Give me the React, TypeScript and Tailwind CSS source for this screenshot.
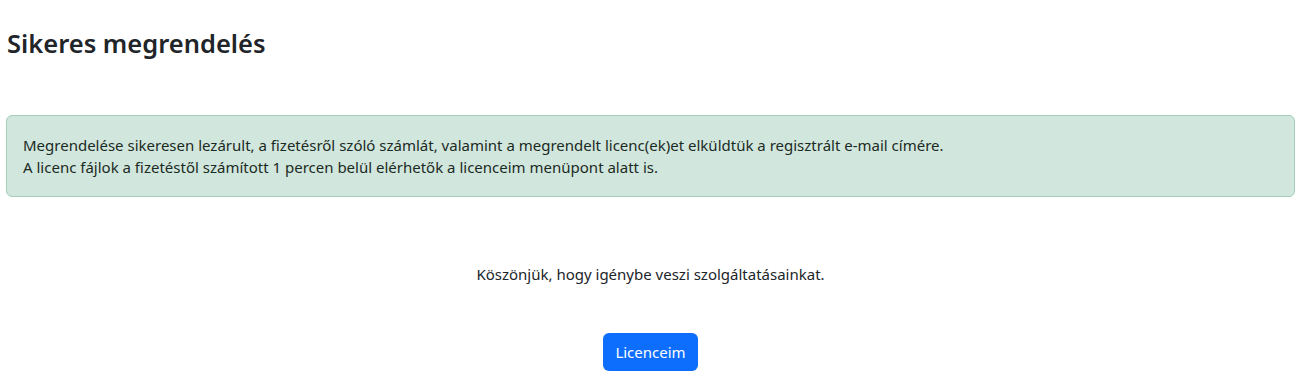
export default function App() {
    return (
        <div className="min-h-[381px] bg-white pl-[6px] pr-[16px] text-[#212529]" style={{ fontFamily: '"Noto Sans", "Open Sans", sans-serif' }}>
            <h3 className="pt-[29px] text-[25.5px] font-semibold leading-[29px] pl-px">Sikeres megrendelés</h3>
            <div className="mt-[57px] rounded-[6px] border border-[#a3cfbb] bg-[#d1e7dd] px-4 py-[18px] text-[15px] leading-[22px] text-[#1c2a24]">
                <div>Megrendelése sikeresen lezárult, a fizetésről szóló számlát, valamint a megrendelt licenc(ek)et elküldtük a regisztrált e-mail címére.</div>
                <div>A licenc fájlok a fizetéstől számított 1 percen belül elérhetők a licenceim menüpont alatt is.</div>
            </div>
            <div className="mt-[66px] text-center text-[15px] leading-[22px]">Köszönjük, hogy igénybe veszi szolgáltatásainkat.</div>
            <div className="mt-[48px] flex justify-center">
                <button className="h-[38px] rounded-[6px] bg-[#0d6efd] px-[12px] text-[15px] text-white">Licenceim</button>
            </div>
        </div>
    );
}
